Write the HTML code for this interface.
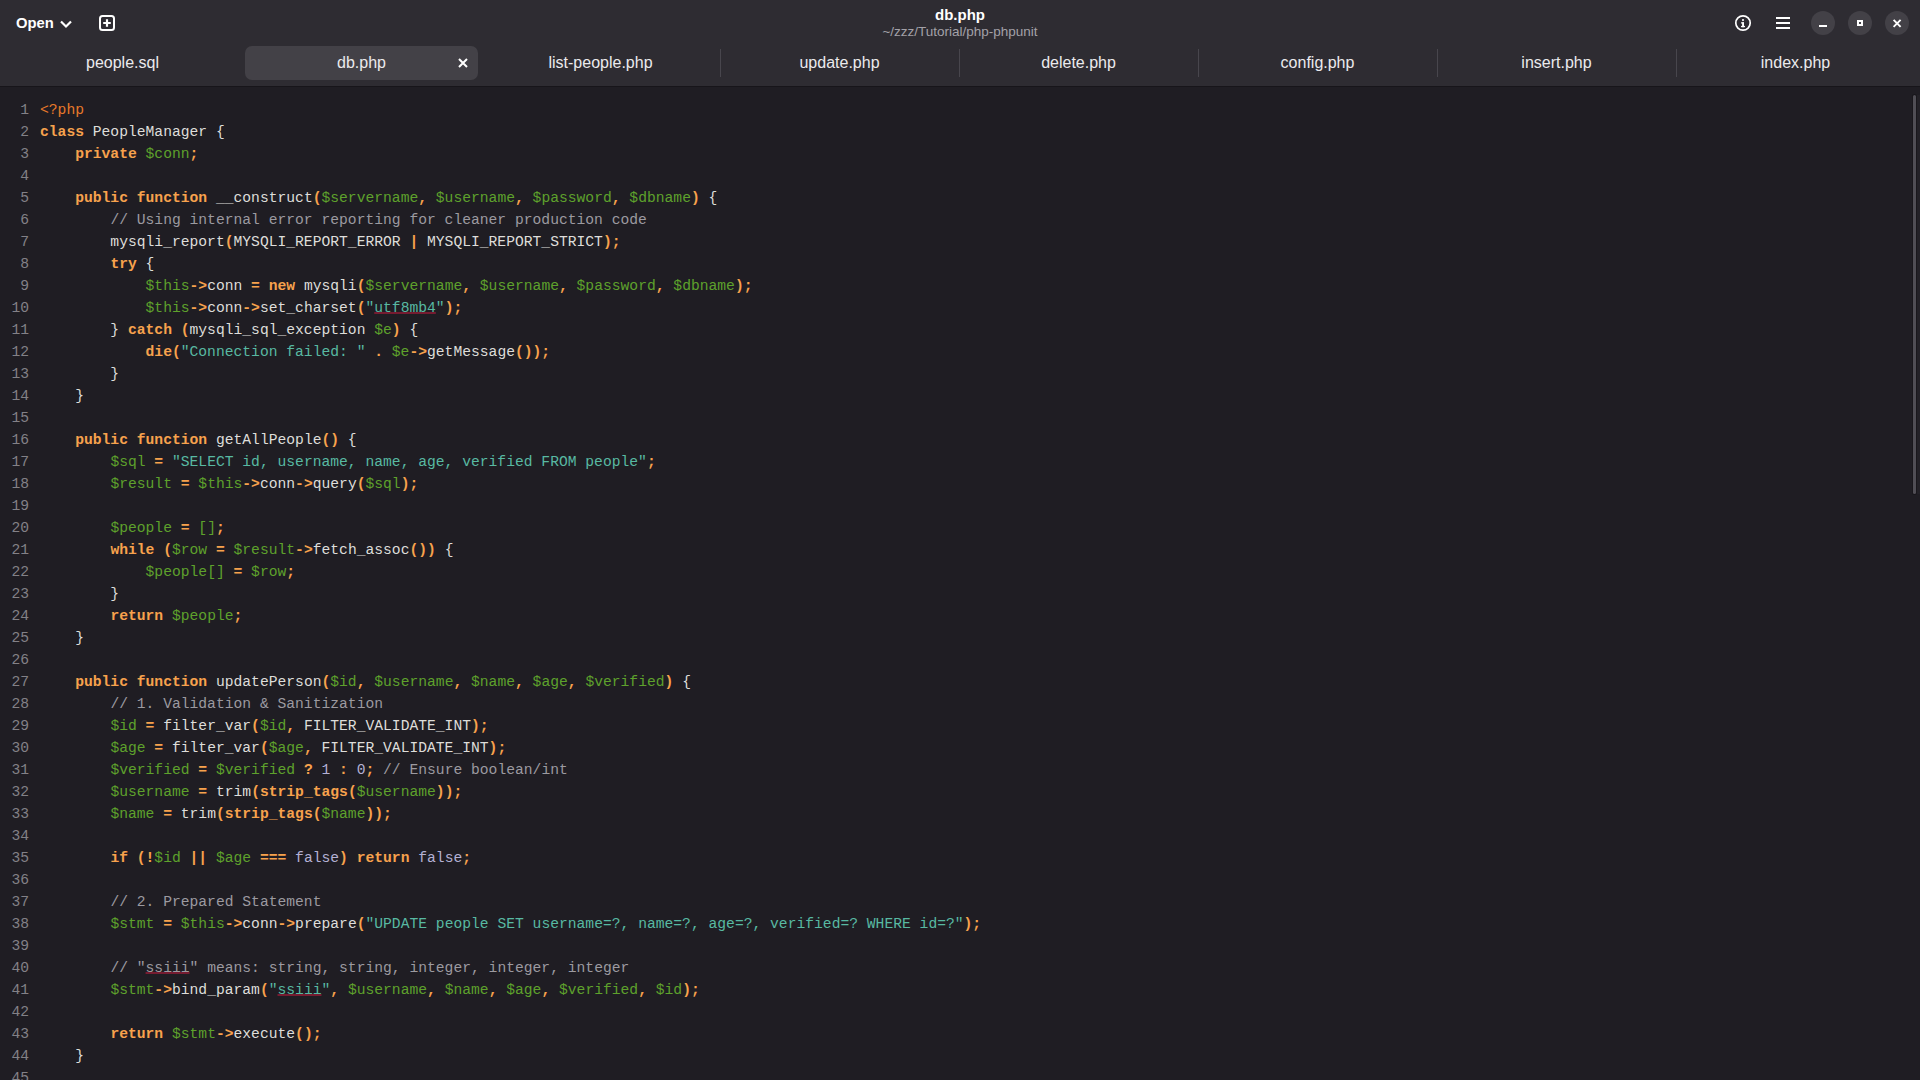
<!DOCTYPE html>
<html><head><meta charset="utf-8">
<style>
html,body{margin:0;padding:0;}
body{width:1920px;height:1080px;overflow:hidden;background:#1f1d23;position:relative;font-family:"Liberation Sans",sans-serif;}
#hdr{position:absolute;left:0;top:0;width:1920px;height:86px;background:#2e2c32;}
#hline{position:absolute;left:0;top:86px;width:1920px;height:1px;background:#17151a;}
.abs{position:absolute;white-space:pre;}
#open{left:16px;top:13px;font-size:14.8px;font-weight:bold;color:#ffffff;line-height:20px;}
#title{left:0;width:1920px;text-align:center;top:5px;font-size:15px;font-weight:bold;color:#ffffff;line-height:20px;}
#sub{left:0;width:1920px;text-align:center;top:23px;font-size:13.5px;color:#a3a1a8;line-height:18px;}
.tab{position:absolute;top:46px;height:34px;width:233px;text-align:center;font-size:16px;line-height:34px;color:#ebeaed;}
.tab.act{background:#434147;border-radius:7px;}
.sep{position:absolute;top:49px;height:28px;width:1px;background:#48464d;}
.wbtn{position:absolute;top:11px;width:24px;height:24px;border-radius:12px;background:#434147;}
#code,#nums{position:absolute;top:99px;margin:0;font-family:"Liberation Mono",monospace;font-size:14.667px;line-height:22px;}
#nums{left:0;width:29px;text-align:right;color:#838187;}
#code{left:40px;color:#deddda;}
.k{color:#f7a24d;font-weight:bold;}
.p{color:#f7a24d;font-weight:bold;}
.tg{color:#e8792a;}
.v{color:#5ea12c;}
.s{color:#58b9a2;}
.c{color:#9c9aa0;}
.n{color:#b4b1d4;}
u{text-decoration:underline solid #761b30;text-decoration-thickness:1.6px;text-underline-offset:0px;}
#sb{position:absolute;left:1913px;top:95px;width:3px;height:399px;background:#504e55;border-radius:1.5px;box-shadow:0 0 0 1px #19171c;}
#sb2{position:absolute;left:1917px;top:95px;width:3px;height:399px;background:#232127;}
</style></head><body>
<div id="hdr">
  <div id="open" class="abs">Open</div>
  <svg class="abs" style="left:58px;top:18px" width="16" height="12" viewBox="0 0 16 12"><path d="M3 3.5 L8 8.5 L13 3.5" fill="none" stroke="#fff" stroke-width="2.2"/></svg>
  <svg class="abs" style="left:98px;top:14px" width="18" height="18" viewBox="0 0 18 18"><rect x="2" y="2" width="14" height="14" rx="2.5" fill="none" stroke="#fff" stroke-width="2"/><path d="M9 5.2V12.8M5.2 9H12.8" stroke="#fff" stroke-width="2.2"/></svg>
  <div id="title" class="abs">db.php</div>
  <div id="sub" class="abs">~/zzz/Tutorial/php-phpunit</div>
  <svg class="abs" style="left:1734px;top:14px" width="18" height="18" viewBox="0 0 18 18"><circle cx="9" cy="9" r="7.2" fill="none" stroke="#fff" stroke-width="1.7"/><rect x="8.1" y="8.3" width="1.9" height="4.9" fill="#fff"/><rect x="7" y="8.3" width="3" height="1.2" fill="#fff"/><rect x="7" y="11.9" width="4" height="1.3" fill="#fff"/><circle cx="9" cy="6.1" r="1.05" fill="#fff"/></svg>
  <svg class="abs" style="left:1775px;top:16px" width="16" height="14" viewBox="0 0 16 14"><rect x="1" y="1" width="14" height="2" fill="#fff"/><rect x="1" y="6" width="14" height="2" fill="#fff"/><rect x="1" y="11" width="14" height="2" fill="#fff"/></svg>
  <div class="wbtn" style="left:1811px"></div>
  <div class="wbtn" style="left:1848px"></div>
  <div class="wbtn" style="left:1885px"></div>
  <div class="abs" style="left:1819px;top:25px;width:8px;height:2px;background:#fff"></div>
  <div class="abs" style="left:1857px;top:20px;width:2px;height:2px;border:2px solid #fff"></div>
  <svg class="abs" style="left:1892px;top:18px" width="10" height="10" viewBox="0 0 10 10"><path d="M1.6 1.8L8.6 8.8M8.6 1.8L1.6 8.8" stroke="#fff" stroke-width="1.9"/></svg>

  <div class="tab" style="left:6px">people.sql</div>
  <div class="tab act" style="left:245px">db.php</div>
  <svg class="abs" style="left:457px;top:57px" width="12" height="12" viewBox="0 0 12 12"><path d="M2 2L10 10M10 2L2 10" stroke="#fff" stroke-width="2"/></svg>
  <div class="tab" style="left:484px">list-people.php</div>
  <div class="tab" style="left:723px">update.php</div>
  <div class="tab" style="left:962px">delete.php</div>
  <div class="tab" style="left:1201px">config.php</div>
  <div class="tab" style="left:1440px">insert.php</div>
  <div class="tab" style="left:1679px">index.php</div>
  <div class="sep" style="left:720px"></div>
  <div class="sep" style="left:959px"></div>
  <div class="sep" style="left:1198px"></div>
  <div class="sep" style="left:1437px"></div>
  <div class="sep" style="left:1676px"></div>
</div>
<div id="hline"></div>
<pre id="nums">1
2
3
4
5
6
7
8
9
10
11
12
13
14
15
16
17
18
19
20
21
22
23
24
25
26
27
28
29
30
31
32
33
34
35
36
37
38
39
40
41
42
43
44
45
46</pre>
<pre id="code"><span class="tg">&lt;?php</span>
<span class="k">class</span> PeopleManager {
    <span class="k">private</span> <span class="v">$conn</span><span class="p">;</span>

    <span class="k">public</span> <span class="k">function</span> __construct<span class="p">(</span><span class="v">$servername</span><span class="p">,</span> <span class="v">$username</span><span class="p">,</span> <span class="v">$password</span><span class="p">,</span> <span class="v">$dbname</span><span class="p">)</span> {
        <span class="c">// Using internal error reporting for cleaner production code</span>
        mysqli_report<span class="p">(</span>MYSQLI_REPORT_ERROR <span class="p">|</span> MYSQLI_REPORT_STRICT<span class="p">)</span><span class="p">;</span>
        <span class="k">try</span> {
            <span class="v">$this</span><span class="p">-&gt;</span>conn <span class="p">=</span> <span class="k">new</span> mysqli<span class="p">(</span><span class="v">$servername</span><span class="p">,</span> <span class="v">$username</span><span class="p">,</span> <span class="v">$password</span><span class="p">,</span> <span class="v">$dbname</span><span class="p">)</span><span class="p">;</span>
            <span class="v">$this</span><span class="p">-&gt;</span>conn<span class="p">-&gt;</span>set_charset<span class="p">(</span><span class="s">"<u>utf8mb4</u>"</span><span class="p">)</span><span class="p">;</span>
        } <span class="k">catch</span> <span class="p">(</span>mysqli_sql_exception <span class="v">$e</span><span class="p">)</span> {
            <span class="k">die</span><span class="p">(</span><span class="s">"Connection failed: "</span> <span class="p">.</span> <span class="v">$e</span><span class="p">-&gt;</span>getMessage<span class="p">(</span><span class="p">)</span><span class="p">)</span><span class="p">;</span>
        }
    }

    <span class="k">public</span> <span class="k">function</span> getAllPeople<span class="p">(</span><span class="p">)</span> {
        <span class="v">$sql</span> <span class="p">=</span> <span class="s">"SELECT id, username, name, age, verified FROM people"</span><span class="p">;</span>
        <span class="v">$result</span> <span class="p">=</span> <span class="v">$this</span><span class="p">-&gt;</span>conn<span class="p">-&gt;</span>query<span class="p">(</span><span class="v">$sql</span><span class="p">)</span><span class="p">;</span>

        <span class="v">$people</span> <span class="p">=</span> <span class="v">[]</span><span class="p">;</span>
        <span class="k">while</span> <span class="p">(</span><span class="v">$row</span> <span class="p">=</span> <span class="v">$result</span><span class="p">-&gt;</span>fetch_assoc<span class="p">(</span><span class="p">)</span><span class="p">)</span> {
            <span class="v">$people</span><span class="v">[]</span> <span class="p">=</span> <span class="v">$row</span><span class="p">;</span>
        }
        <span class="k">return</span> <span class="v">$people</span><span class="p">;</span>
    }

    <span class="k">public</span> <span class="k">function</span> updatePerson<span class="p">(</span><span class="v">$id</span><span class="p">,</span> <span class="v">$username</span><span class="p">,</span> <span class="v">$name</span><span class="p">,</span> <span class="v">$age</span><span class="p">,</span> <span class="v">$verified</span><span class="p">)</span> {
        <span class="c">// 1. Validation &amp; Sanitization</span>
        <span class="v">$id</span> <span class="p">=</span> filter_var<span class="p">(</span><span class="v">$id</span><span class="p">,</span> FILTER_VALIDATE_INT<span class="p">)</span><span class="p">;</span>
        <span class="v">$age</span> <span class="p">=</span> filter_var<span class="p">(</span><span class="v">$age</span><span class="p">,</span> FILTER_VALIDATE_INT<span class="p">)</span><span class="p">;</span>
        <span class="v">$verified</span> <span class="p">=</span> <span class="v">$verified</span> <span class="p">?</span> <span class="n">1</span> <span class="p">:</span> <span class="n">0</span><span class="p">;</span> <span class="c">// Ensure boolean/int</span>
        <span class="v">$username</span> <span class="p">=</span> trim<span class="p">(</span><span class="k">strip_tags</span><span class="p">(</span><span class="v">$username</span><span class="p">)</span><span class="p">)</span><span class="p">;</span>
        <span class="v">$name</span> <span class="p">=</span> trim<span class="p">(</span><span class="k">strip_tags</span><span class="p">(</span><span class="v">$name</span><span class="p">)</span><span class="p">)</span><span class="p">;</span>

        <span class="k">if</span> <span class="p">(</span><span class="p">!</span><span class="v">$id</span> <span class="p">||</span> <span class="v">$age</span> <span class="p">===</span> <span class="n">false</span><span class="p">)</span> <span class="k">return</span> <span class="n">false</span><span class="p">;</span>

        <span class="c">// 2. Prepared Statement</span>
        <span class="v">$stmt</span> <span class="p">=</span> <span class="v">$this</span><span class="p">-&gt;</span>conn<span class="p">-&gt;</span>prepare<span class="p">(</span><span class="s">"UPDATE people SET username=?, name=?, age=?, verified=? WHERE id=?"</span><span class="p">)</span><span class="p">;</span>

        <span class="c">// "<u>ssiii</u>" means: string, string, integer, integer, integer</span>
        <span class="v">$stmt</span><span class="p">-&gt;</span>bind_param<span class="p">(</span><span class="s">"<u>ssiii</u>"</span><span class="p">,</span> <span class="v">$username</span><span class="p">,</span> <span class="v">$name</span><span class="p">,</span> <span class="v">$age</span><span class="p">,</span> <span class="v">$verified</span><span class="p">,</span> <span class="v">$id</span><span class="p">)</span><span class="p">;</span>

        <span class="k">return</span> <span class="v">$stmt</span><span class="p">-&gt;</span>execute<span class="p">(</span><span class="p">)</span><span class="p">;</span>
    }

</pre>
<div id="sb2"></div><div id="sb"></div>
</body></html>
